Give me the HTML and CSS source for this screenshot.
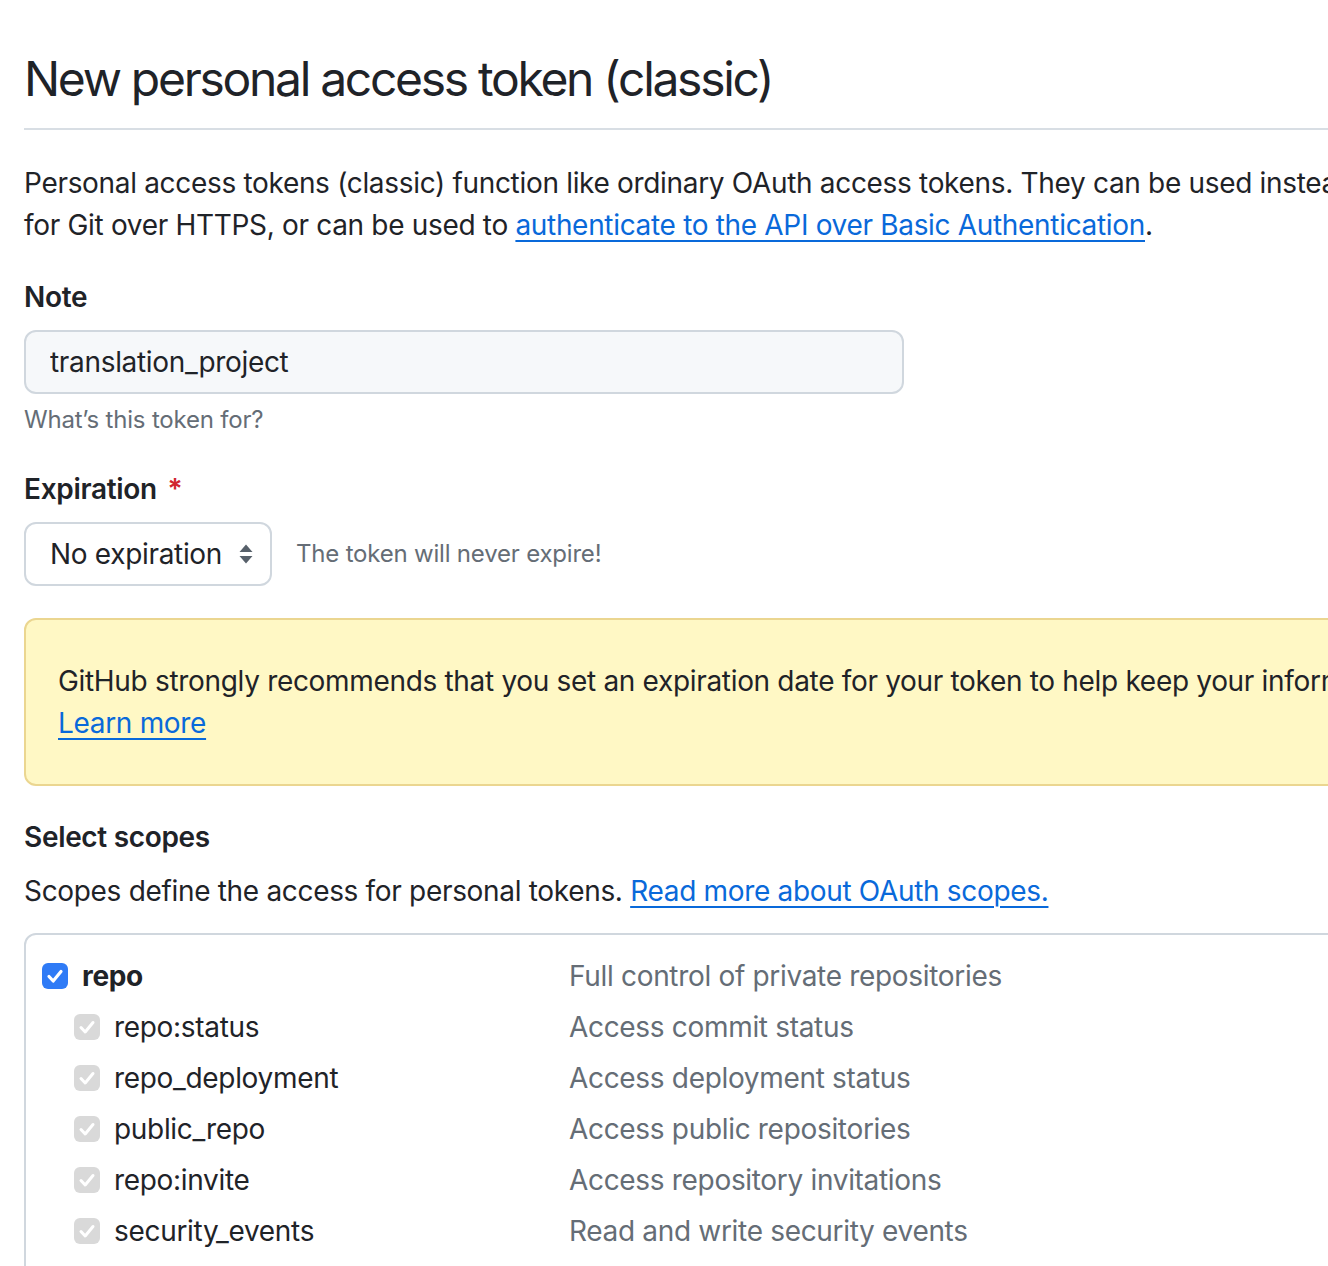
FILE: index.html
```html
<!DOCTYPE html>
<html lang="en">
<head>
<meta charset="utf-8">
<title>New personal access token (classic)</title>
<link rel="stylesheet" href="styles.css">
</head>
<body>
<main class="page">
  <div class="subhead">
    <h1 class="subhead-heading">New personal access token (classic)</h1>
  </div>

  <p class="intro">Personal access tokens (classic) function like ordinary OAuth access tokens. They can be used instead of a password<br>for Git over HTTPS, or can be used to <a href="#" class="link">authenticate to the API over Basic Authentication</a>.</p>

  <dl class="form-group">
    <dt><label class="label">Note</label></dt>
    <dd>
      <input class="form-control" type="text" value="translation_project">
      <p class="note">What’s this token for?</p>
    </dd>
  </dl>

  <dl class="form-group">
    <dt><label class="label">Expiration <span class="required">*</span></label></dt>
    <dd class="expiry-row">
      <div class="select">
        <span>No expiration</span>
        <svg class="select-arrows" width="16" height="22" viewBox="0 0 16 22" aria-hidden="true">
          <path d="M8 1.5 L14.5 9 H1.5 Z" fill="#57606a"/>
          <path d="M8 20.5 L14.5 13 H1.5 Z" fill="#57606a"/>
        </svg>
      </div>
      <span class="expiry-note">The token will never expire!</span>
    </dd>
  </dl>

  <div class="flash">
    GitHub strongly recommends that you set an expiration date for your token to help keep your information secure.<br>
    <a href="#" class="link">Learn more</a>
  </div>

  <h3 class="section-title">Select scopes</h3>
  <p class="scopes-intro">Scopes define the access for personal tokens. <a href="#" class="link">Read more about OAuth scopes.</a></p>

  <div class="scopes">
    <div class="scope-row">
      <div class="scope-name parent">
        <span class="cb cb-on"><svg viewBox="0 0 26 26" width="26" height="26"><path d="M7 13.5 L11.2 18 L19 8.5" fill="none" stroke="#fff" stroke-width="3.2" stroke-linecap="round" stroke-linejoin="round"/></svg></span>
        <strong>repo</strong>
      </div>
      <div class="scope-desc">Full control of private repositories</div>
    </div>
    <div class="scope-row">
      <div class="scope-name child">
        <span class="cb cb-dis"><svg viewBox="0 0 26 26" width="26" height="26"><path d="M7 13.5 L11.2 18 L19 8.5" fill="none" stroke="#fff" stroke-width="3" stroke-linecap="round" stroke-linejoin="round"/></svg></span>
        <span>repo:status</span>
      </div>
      <div class="scope-desc">Access commit status</div>
    </div>
    <div class="scope-row">
      <div class="scope-name child">
        <span class="cb cb-dis"><svg viewBox="0 0 26 26" width="26" height="26"><path d="M7 13.5 L11.2 18 L19 8.5" fill="none" stroke="#fff" stroke-width="3" stroke-linecap="round" stroke-linejoin="round"/></svg></span>
        <span>repo_deployment</span>
      </div>
      <div class="scope-desc">Access deployment status</div>
    </div>
    <div class="scope-row">
      <div class="scope-name child">
        <span class="cb cb-dis"><svg viewBox="0 0 26 26" width="26" height="26"><path d="M7 13.5 L11.2 18 L19 8.5" fill="none" stroke="#fff" stroke-width="3" stroke-linecap="round" stroke-linejoin="round"/></svg></span>
        <span>public_repo</span>
      </div>
      <div class="scope-desc">Access public repositories</div>
    </div>
    <div class="scope-row">
      <div class="scope-name child">
        <span class="cb cb-dis"><svg viewBox="0 0 26 26" width="26" height="26"><path d="M7 13.5 L11.2 18 L19 8.5" fill="none" stroke="#fff" stroke-width="3" stroke-linecap="round" stroke-linejoin="round"/></svg></span>
        <span>repo:invite</span>
      </div>
      <div class="scope-desc">Access repository invitations</div>
    </div>
    <div class="scope-row">
      <div class="scope-name child">
        <span class="cb cb-dis"><svg viewBox="0 0 26 26" width="26" height="26"><path d="M7 13.5 L11.2 18 L19 8.5" fill="none" stroke="#fff" stroke-width="3" stroke-linecap="round" stroke-linejoin="round"/></svg></span>
        <span>security_events</span>
      </div>
      <div class="scope-desc">Read and write security events</div>
    </div>
    <div class="scope-row">
      <div class="scope-name parent">
        <span class="cb cb-off"></span>
        <strong>workflow</strong>
      </div>
      <div class="scope-desc">Update GitHub Action workflows</div>
    </div>
  </div>
</main>
</body>
</html>
```

FILE: styles.css
```css
html, body {
  margin: 0;
  padding: 0;
  overflow: hidden;
  background: #ffffff;
}

body {
  font-family: Inter, "Noto Sans", "Liberation Sans", sans-serif;
  font-size: 28px;
  line-height: 42px;
  letter-spacing: -0.32px;
  color: #1f2328;
}

.page {
  width: 1600px;
  padding: 43px 0 0 24px;
  box-sizing: border-box;
}

.subhead {
  border-bottom: 2px solid #d8dee4;
  padding-bottom: 13px;
  margin-bottom: 32px;
}

.subhead-heading {
  margin: 0;
  font-size: 48px;
  line-height: 72px;
  font-weight: 400;
  letter-spacing: -2.3px;
}

.intro {
  margin: 0;
}

.link {
  color: #0969da;
  text-decoration: underline;
  text-underline-offset: 5px;
  text-decoration-thickness: 2px;
}

.form-group {
  margin: 30px 0;
}

.form-group dt {
  margin: 0 0 12px;
}

.form-group dd {
  margin: 0;
}

.label {
  font-weight: 600;
}

.required {
  color: #d1242f;
  margin-left: 4px;
}

.form-control {
  display: block;
  width: 880px;
  height: 64px;
  box-sizing: border-box;
  padding: 10px 24px;
  font: inherit;
  letter-spacing: inherit;
  color: #1f2328;
  background: #f6f8fa;
  border: 2px solid #d0d7de;
  border-radius: 12px;
  outline: none;
}

.note {
  margin: 8px 0 0;
  font-size: 24px;
  line-height: 36px;
  letter-spacing: -0.2px;
  color: #656d76;
}

.expiry-row {
  display: flex;
  align-items: center;
  gap: 24px;
}

.select {
  display: flex;
  align-items: center;
  gap: 16px;
  height: 64px;
  box-sizing: border-box;
  padding: 0 16px 0 24px;
  border: 2px solid #d0d7de;
  border-radius: 12px;
  background: #ffffff;
}

.select-arrows {
  display: block;
}

.expiry-note {
  font-size: 24px;
  letter-spacing: -0.2px;
  color: #656d76;
}

.flash {
  margin-top: 32px;
  padding: 40px 32px;
  background: #fff8c5;
  border: 2px solid #ebd690;
  border-radius: 12px;
}

.section-title {
  margin: 30px 0 0;
  font-size: 28px;
  line-height: 42px;
  font-weight: 600;
}

.scopes-intro {
  margin: 12px 0 21px;
}

.scopes {
  border: 2px solid #d0d7de;
  border-radius: 12px;
  padding: 15px 16px;
}

.scope-row {
  display: grid;
  grid-template-columns: 527px auto;
  align-items: center;
  height: 51px;
}

.scope-name {
  display: flex;
  align-items: center;
  gap: 14px;
}

.scope-name.child {
  padding-left: 32px;
}

.scope-name strong {
  font-weight: 700;
}

.cb {
  display: block;
  width: 26px;
  height: 26px;
  border-radius: 6px;
  flex: none;
}

.cb svg {
  display: block;
}

.cb-on {
  background: #2f7bf6;
}

.cb-dis {
  background: #d9d9d9;
}

.cb-off {
  box-sizing: border-box;
  border: 2px solid #b8bcc2;
  background: #fff;
}

.scope-desc {
  color: #656d76;
}
```
